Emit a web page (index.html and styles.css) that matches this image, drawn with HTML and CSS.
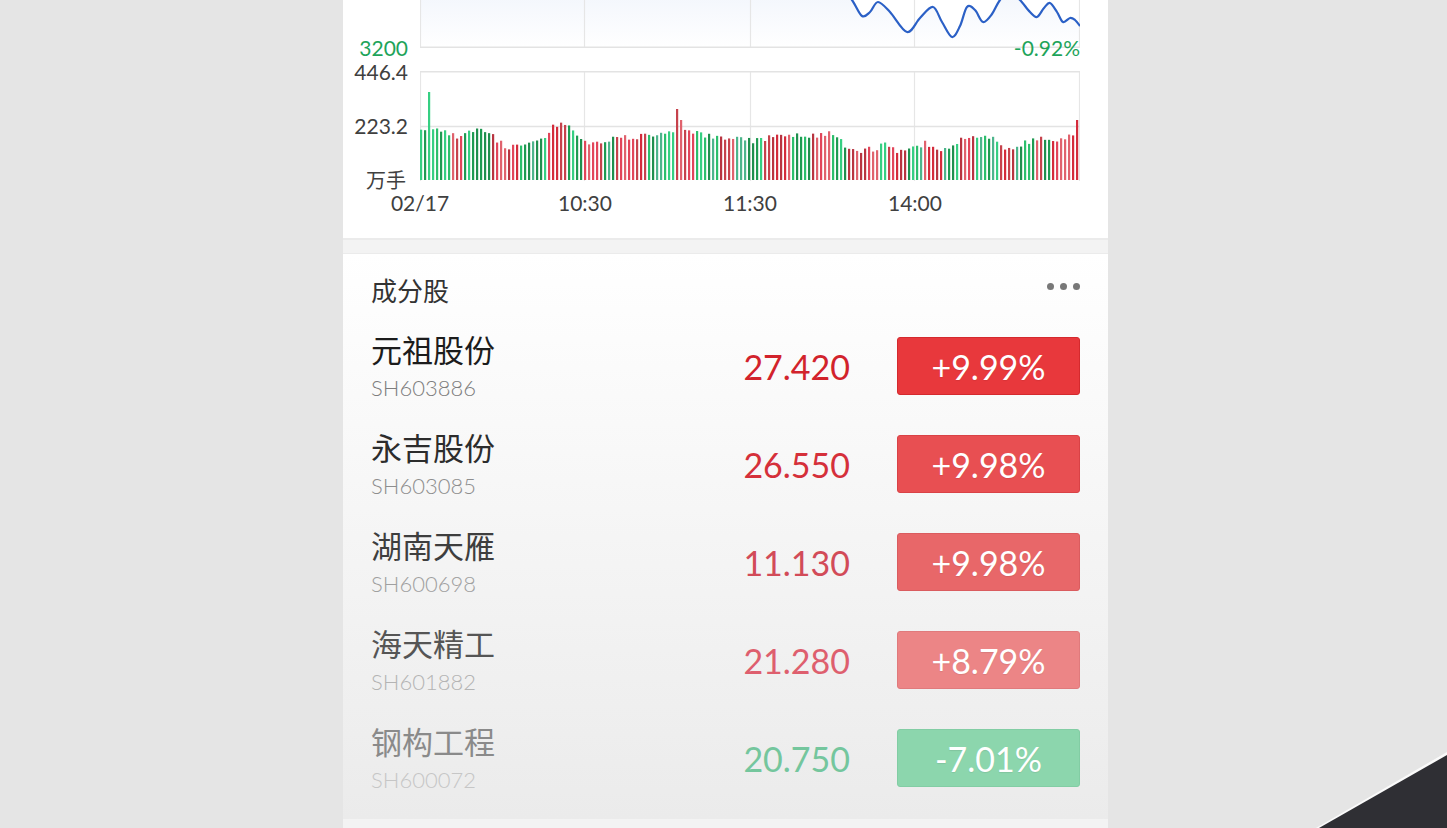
FILE: index.html
```html
<!DOCTYPE html>
<html lang="zh-CN">
<head>
  <meta charset="UTF-8" />
  <title>成分股</title>
  <link rel="stylesheet" href="styles.css">
</head>
<body>
  <div class="screen">
    <div class="chart-card">
      <div class="plot-row price-row">
        <div class="axis"><span class="axis-label down">3200</span></div>
        <div class="plot">
          <svg id="price" width="660" height="48" viewBox="0 0 660 48"></svg>
          <span class="change down">-0.92%</span>
        </div>
      </div>
      <div class="plot-row vol-row">
        <div class="axis vol-axis">
          <span>446.4</span>
          <span>223.2</span>
          <span class="unit">万手</span>
        </div>
        <div class="plot">
          <svg id="volume" width="660" height="110" viewBox="0 0 660 110"></svg>
        </div>
      </div>
      <div class="time-row">
        <span>02/17</span>
        <span>10:30</span>
        <span>11:30</span>
        <span>14:00</span>
      </div>
    </div>

    <div class="list-card">
      <div class="list-head">
        <span class="title">成分股</span>
        <span class="more"><i></i><i></i><i></i></span>
      </div>

      <div class="stock fade-1">
        <div class="info">
          <div class="name">元祖股份</div>
          <div class="code">SH603886</div>
        </div>
        <div class="price">27.420</div>
        <div class="badge">+9.99%</div>
      </div>

      <div class="stock fade-2">
        <div class="info">
          <div class="name">永吉股份</div>
          <div class="code">SH603085</div>
        </div>
        <div class="price">26.550</div>
        <div class="badge">+9.98%</div>
      </div>

      <div class="stock fade-3">
        <div class="info">
          <div class="name">湖南天雁</div>
          <div class="code">SH600698</div>
        </div>
        <div class="price">11.130</div>
        <div class="badge">+9.98%</div>
      </div>

      <div class="stock fade-4">
        <div class="info">
          <div class="name">海天精工</div>
          <div class="code">SH601882</div>
        </div>
        <div class="price">21.280</div>
        <div class="badge">+8.79%</div>
      </div>

      <div class="stock fade-5">
        <div class="info">
          <div class="name">钢构工程</div>
          <div class="code">SH600072</div>
        </div>
        <div class="price">20.750</div>
        <div class="badge">-7.01%</div>
      </div>
    </div>
  </div>

  <script src="script.js"></script>
</body>
</html>
```

FILE: styles.css
```css
body {
  margin: 0;
  padding-left: 4px;
  height: 828px;
  overflow: hidden;
  background-color: #e5e5e5;
  font-family: "Lato", "Noto Sans CJK SC", sans-serif;
  color: #333;
}

body::before,
body::after {
  content: "";
  position: fixed;
  right: 0;
  bottom: 0;
  clip-path: polygon(100% 0, 100% 100%, 0 100%);
}

body::before {
  width: 131px;
  height: 76px;
  background-color: #fafafa;
}

body::after {
  width: 128px;
  height: 73px;
  background-color: #2f2f34;
}

.screen {
  width: 765px;
  height: 828px;
  margin: 0 auto;
  background-color: #f3f3f3;
}

/* chart */

.chart-card {
  height: 240px;
  background-color: #fff;
  border-bottom: 2px solid #ebebeb;
  box-sizing: border-box;
}

.plot-row {
  display: flex;
}

.axis {
  width: 65px;
  margin-right: 12px;
  text-align: right;
  font-size: 21px;
  line-height: 18px;
  color: #404040;
}

.price-row {
  height: 48px;
}

.axis-label {
  display: block;
  margin-top: 39px;
}

.down {
  color: #1ea45a;
}

.plot {
  position: relative;
  width: 660px;
}

.plot svg {
  display: block;
}

.change {
  position: absolute;
  right: 0;
  top: 39px;
  font-size: 21px;
  line-height: 18px;
}

.vol-row {
  margin-top: 15px;
}

.vol-axis {
  display: flex;
  flex-direction: column;
  gap: 36px;
}

.vol-axis .unit {
  font-family: "Noto Sans CJK SC", sans-serif;
  font-size: 20px;
  margin-right: 2px;
}

.vol-row svg {
  margin-top: 8px;
}

.time-row {
  display: grid;
  grid-template-columns: repeat(4, 165px);
  margin: 4px 0 0 77px;
  font-size: 21px;
  line-height: 20px;
  color: #404040;
}

.time-row span {
  justify-self: start;
  transform: translateX(-50%);
}

/* constituent list */

.list-card {
  margin-top: 13px;
  padding: 0 28px 12px;
  border-top: 1px solid #ebebeb;
  background: linear-gradient(#fff, #ebebeb);
}

.list-head {
  display: flex;
  justify-content: space-between;
  align-items: center;
  height: 63px;
  padding-top: 7px;
  box-sizing: border-box;
}

.title {
  font-family: "Noto Sans CJK SC", sans-serif;
  font-size: 26px;
  color: #333;
}

.more {
  display: flex;
  gap: 6px;
  margin-bottom: 6px;
}

.more i {
  width: 7px;
  height: 7px;
  border-radius: 50%;
  background-color: #787878;
}

.stock {
  display: flex;
  align-items: center;
  height: 98px;
}

.info {
  flex: 1;
}

.name {
  font-family: "Noto Sans CJK SC", sans-serif;
  font-size: 31px;
  line-height: 34px;
}

.code {
  margin-top: 9px;
  font-size: 22px;
  font-weight: 300;
  line-height: 26px;
}

.price {
  margin-right: 47px;
  font-size: 34px;
}

.badge {
  display: flex;
  justify-content: center;
  align-items: center;
  width: 183px;
  height: 58px;
  box-sizing: border-box;
  border-radius: 3px;
  font-size: 34px;
  color: #fff;
  text-shadow: 0 1px 1px rgba(0, 0, 0, 0.08);
}

.fade-1 .name { color: #1c1c1c; }
.fade-1 .code { color: #7e7e7e; }
.fade-1 .price { color: #d2232c; }
.fade-1 .badge { background-color: #e8383c; border: 1px solid #d42a2e; }

.fade-2 .name { color: #2c2c2c; }
.fade-2 .code { color: #8e8e8e; }
.fade-2 .price { color: #d5303a; }
.fade-2 .badge { background-color: #e84f52; border: 1px solid #d94246; }

.fade-3 .name { color: #3e3e3e; }
.fade-3 .code { color: #a0a0a0; }
.fade-3 .price { color: #d24b58; }
.fade-3 .badge { background-color: #e86769; border: 1px solid #da5c5f; }

.fade-4 .name { color: #555; }
.fade-4 .code { color: #b4b4b4; }
.fade-4 .price { color: #de5f6e; }
.fade-4 .badge { background-color: #ec8586; border: 1px solid #e07a7c; }

.fade-5 .name { color: #8a8a8a; }
.fade-5 .code { color: #c6c6c6; }
.fade-5 .price { color: #74c69d; }
.fade-5 .badge { background-color: #8cd6ad; border: 1px solid #82cda4; }
```

FILE: script.js
```js
const NS = 'http://www.w3.org/2000/svg';
const GRID_X = [0.5, 164.5, 330.5, 494.5, 659.5];

function el(name, attrs) {
  const node = document.createElementNS(NS, name);
  for (const key in attrs) node.setAttribute(key, attrs[key]);
  return node;
}

let seed = 11;
function rand() {
  seed = (seed * 16807) % 2147483647;
  return seed / 2147483647;
}

// linear interpolation through [x, y] pairs
function interp(points, x) {
  for (let i = 1; i < points.length; i++) {
    const [x0, y0] = points[i - 1];
    const [x1, y1] = points[i];
    if (x <= x1) return y0 + (y1 - y0) * (x - x0) / (x1 - x0);
  }
  return points[points.length - 1][1];
}

function smoothPath(pts) {
  let d = `M${pts[0][0]},${pts[0][1]}`;
  for (let i = 0; i < pts.length - 1; i++) {
    const p0 = pts[i - 1] || pts[i];
    const p1 = pts[i];
    const p2 = pts[i + 1];
    const p3 = pts[i + 2] || p2;
    const c1x = p1[0] + (p2[0] - p0[0]) / 6;
    const c1y = p1[1] + (p2[1] - p0[1]) / 6;
    const c2x = p2[0] - (p3[0] - p1[0]) / 6;
    const c2y = p2[1] - (p3[1] - p1[1]) / 6;
    d += ` C${c1x.toFixed(1)},${c1y.toFixed(1)} ${c2x.toFixed(1)},${c2y.toFixed(1)} ${p2[0]},${p2[1]}`;
  }
  return d;
}

function drawPrice() {
  const svg = document.getElementById('price');

  const defs = el('defs', {});
  const grad = el('linearGradient', { id: 'area', x1: 0, y1: 0, x2: 0, y2: 1 });
  grad.appendChild(el('stop', { offset: 0, 'stop-color': '#f1f5fc' }));
  grad.appendChild(el('stop', { offset: 1, 'stop-color': '#ffffff' }));
  defs.appendChild(grad);
  svg.appendChild(defs);

  // page x -> plot x
  const line = [
    [840, -14], [852, 0], [862, 16], [870, 12], [878, 2], [890, 12], [907, 32],
    [920, 18], [933, 7], [942, 22], [952, 37], [960, 26], [967, 7], [975, 10],
    [983, 22], [992, 14], [1000, 0], [1010, -8], [1020, 0], [1030, 12],
    [1037, 17], [1044, 8], [1050, 3], [1057, 12], [1063, 22], [1070, 18],
    [1075, 20], [1080, 26]
  ].map(([x, y]) => [x - 420, y]);

  const d = smoothPath(line);
  svg.appendChild(el('path', {
    d: `M0,-14 L${line[0][0]},${line[0][1]} ` + d.slice(1) + ' L660,48 L0,48 Z',
    fill: 'url(#area)'
  }));

  GRID_X.forEach(x => {
    svg.appendChild(el('line', { x1: x, y1: 0, x2: x, y2: 48, stroke: '#e6e6e6', 'stroke-width': 1.2 }));
  });
  svg.appendChild(el('line', { x1: 0, y1: 47.3, x2: 660, y2: 47.3, stroke: '#e3e3e3', 'stroke-width': 1.4 }));

  svg.appendChild(el('path', {
    d: d,
    fill: 'none',
    stroke: '#2b60c6',
    'stroke-width': 2.2,
    'stroke-linejoin': 'round'
  }));
}

function drawVolume() {
  const svg = document.getElementById('volume');

  GRID_X.forEach(x => {
    svg.appendChild(el('line', { x1: x, y1: 0, x2: x, y2: 110, stroke: '#e6e6e6', 'stroke-width': 1.2 }));
  });
  [0.7, 55.5].forEach(y => {
    svg.appendChild(el('line', { x1: 0, y1: y, x2: 660, y2: y, stroke: '#e3e3e3', 'stroke-width': 1.4 }));
  });

  // top of bars in page coords, baseline is y = 180
  const tops = [
    [420, 133], [432, 129], [445, 131], [457, 138], [470, 132], [480, 128],
    [493, 137], [507, 147], [520, 143], [540, 140], [552, 128], [560, 123],
    [573, 130], [590, 143], [613, 138], [640, 137], [660, 135], [672, 132],
    [683, 127], [695, 133], [720, 138], [750, 141], [770, 137], [787, 134],
    [810, 137], [833, 133], [847, 148], [860, 152], [887, 145], [900, 153],
    [925, 143], [937, 152], [967, 137], [993, 137], [1010, 151], [1025, 143],
    [1040, 137], [1053, 142], [1068, 136], [1074, 132], [1080, 120]
  ];
  const spikes = { 429: 92, 677: 109, 681: 120, 1077: 120 };

  const greens = ['#1e9b52', '#2cbf6c', '#36cf82', '#4db58c', '#1f8f4e'];
  const reds = ['#d42b3b', '#e2455a', '#c6424c', '#e0626d', '#b83440'];
  let up = true;
  let run = 3;

  for (let i = 0; i < 165; i++) {
    const px = 421 + i * 4;
    let top = interp(tops, px) + (rand() - 0.5) * 6;
    if (spikes[px] !== undefined) top = spikes[px];
    if (run <= 0) {
      up = !up;
      run = 2 + Math.floor(rand() * 7);
    }
    run--;
    let shades = up ? reds : greens;
    if (i < 3) shades = greens;
    if (i > 161) shades = reds;
    svg.appendChild(el('rect', {
      x: px - 421,
      y: top - 71,
      width: 2.2,
      height: 180 - top,
      fill: shades[Math.floor(rand() * shades.length)]
    }));
  }
}

drawPrice();
drawVolume();
```
